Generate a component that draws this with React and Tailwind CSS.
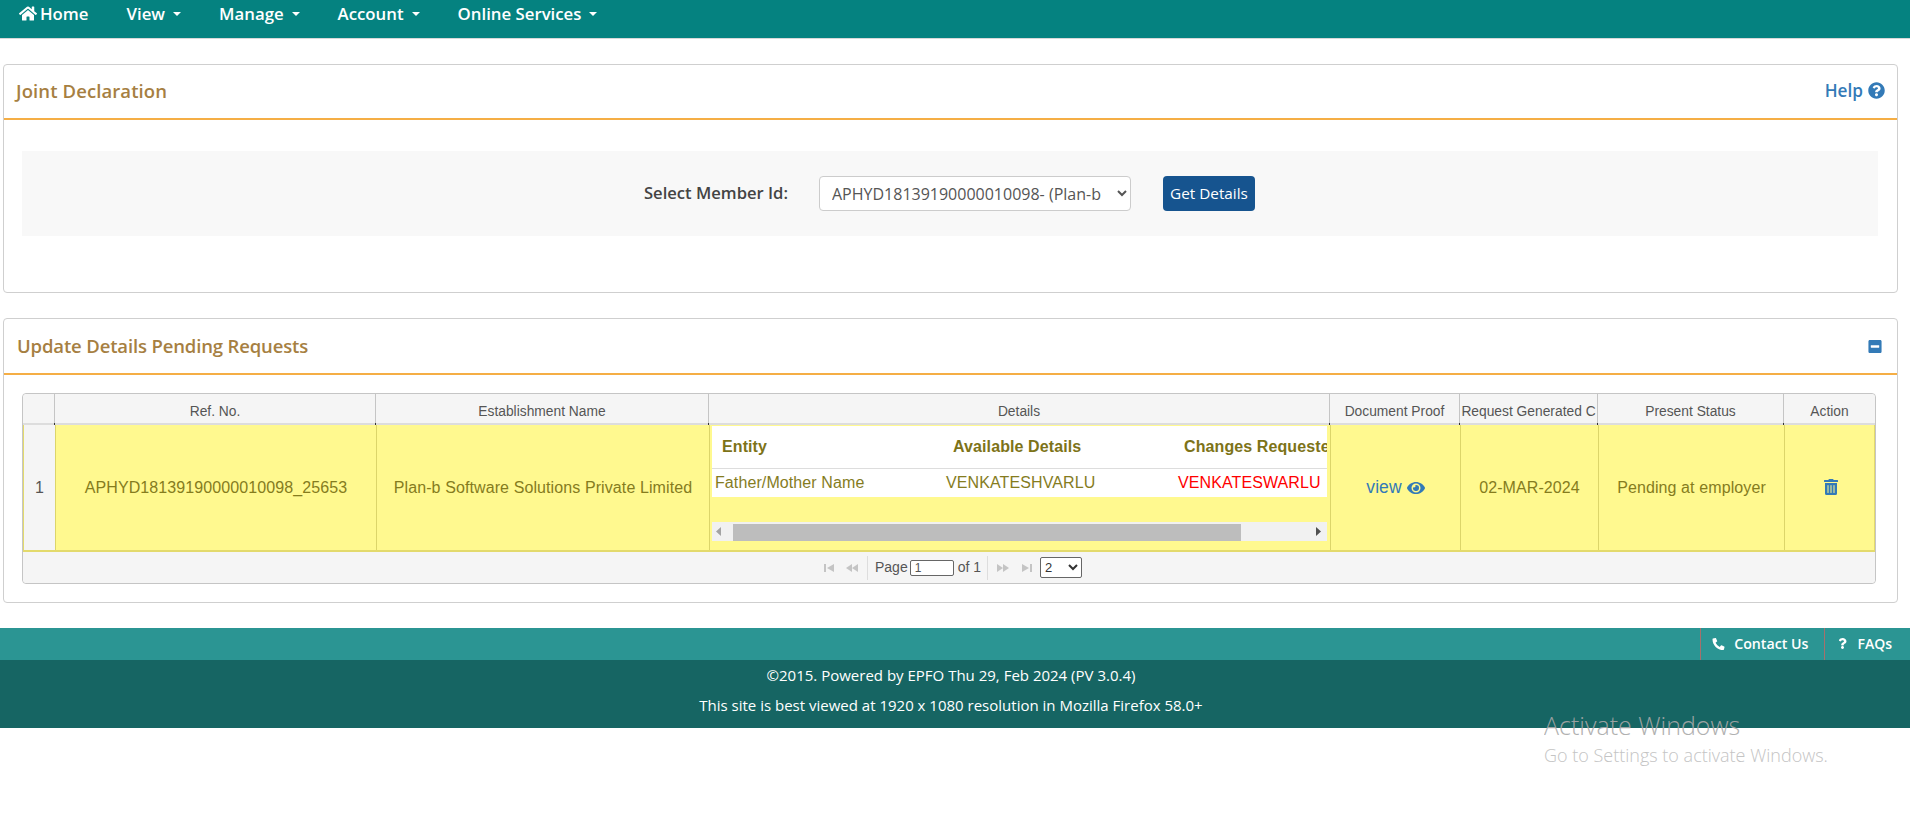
import React from 'react';
import { FaHome, FaQuestionCircle, FaEye, FaMinusSquare, FaTrashAlt, FaPhoneAlt, FaQuestion } from 'react-icons/fa';

const SEGOE = "font-['Open_Sans',sans-serif]";
const ARIAL = "font-['Liberation_Sans',Arial,sans-serif]";

// column widths of the grid, first one is the row number
const cols = ['w-[32px]', 'w-[321px]', 'w-[333px]', 'w-[621px]', 'w-[130px]', 'w-[138px]', 'w-[186px]', 'w-[91px]'];
const headers = ['', 'Ref. No.', 'Establishment Name', 'Details', 'Document Proof', 'Request Generated C', 'Present Status', 'Action'];

const menu = ['View', 'Manage', 'Account', 'Online Services'];

const Caret = () => (
  <span className="ml-[8px] inline-block h-0 w-0 border-x-[4px] border-t-[4px] border-x-transparent border-t-white" />
);

const NavBar = () => (
  <nav className={`h-[39px] border-b border-[#d8d8d8] bg-[#058280] text-white ${SEGOE}`}>
    <div className="flex h-[27px] items-center pl-[19px] text-[16.8px] font-semibold">
      <FaHome className="mr-[3px] h-[17px] w-[18px]" />
      <span>Home</span>
      {menu.map(m => (
        <span key={m} className="ml-[38px] flex items-center">
          {m}
          <Caret />
        </span>
      ))}
    </div>
  </nav>
);

const PanelHead = ({ title, children, titleCls, textCls }) => (
  <div className={`flex items-center justify-between border-b-2 border-[#f5ae45] ${titleCls}`}>
    <h2 className={`text-[18.5px] font-semibold text-[#a67f42] ${textCls} ${SEGOE}`}>{title}</h2>
    {children}
  </div>
);

const PagerArrow = ({ d }) => (
  <svg viewBox="0 0 14 10" className="h-[10px] w-[14px] fill-[#c4c4c4]"><path d={d} /></svg>
);

const Pager = () => (
  <div className={`flex h-[31px] items-center rounded-b bg-[#f5f5f5] pl-[799px] text-[14px] text-[#555] ${ARIAL}`}>
    <PagerArrow d="M2 1h2v8H2zM12 1v8L5 5z" />
    <span className="ml-[9px]"><PagerArrow d="M7 1v8L1 5zM13 1v8L7 5z" /></span>
    <span className="ml-[8px] h-[24px] border-l border-[#ddd]" />
    <span className="ml-[7px]">Page</span>
    <input readOnly value="1" className="ml-[2px] h-[16px] w-[44px] rounded-[2px] border border-[#666] bg-white px-[4px] text-[12px] outline-none" />
    <span className="ml-[4px]">of 1</span>
    <span className="ml-[6px] h-[24px] border-l border-[#ddd]" />
    <span className="ml-[8px]"><PagerArrow d="M1 1v8l6-4zM7 1v8l6-4z" /></span>
    <span className="ml-[10px]"><PagerArrow d="M2 1v8l7-4zM10 1h2v8h-2z" /></span>
    <select className="ml-[6px] h-[21px] w-[42px] rounded-[2px] border border-[#666] bg-white text-[13px] text-[#333]">
      <option>2</option>
    </select>
  </div>
);

const DetailsCell = () => (
  <div className="relative h-full overflow-hidden pl-[2px] pr-[3px] pt-[1px]">
    <div className="h-[71px] overflow-hidden bg-white">
      <div className="flex h-[43px] items-center border-b border-[#ddd] text-[16px] font-bold whitespace-nowrap text-[#7d7318]">
        <span className="ml-[10px] w-[231px] shrink-0">Entity</span>
        <span className="w-[231px] shrink-0">Available Details</span>
        <span>Changes Requested</span>
      </div>
      <div className="flex h-[28px] items-center text-[16px] whitespace-nowrap">
        <span className="ml-[3px] w-[231px] shrink-0">Father/Mother Name</span>
        <span className="w-[232px] shrink-0">VENKATESHVARLU</span>
        <span className="text-[#ff0000]">VENKATESWARLU</span>
      </div>
    </div>
    <div className="mt-[25px] flex h-[19px] items-center bg-[#f1f1f1]">
      <svg viewBox="0 0 21 19" className="h-[19px] w-[21px] shrink-0 fill-[#a3a3a3]"><path d="M9 5v9l-5-4.5z" /></svg>
      <div className="mt-[2px] h-[17px] w-[508px] bg-[#bdbdbd]" />
      <div className="flex-1" />
      <svg viewBox="0 0 17 19" className="h-[19px] w-[17px] shrink-0 fill-[#505050]"><path d="M6 5v9l5-4.5z" /></svg>
    </div>
  </div>
);

const Grid = () => (
  <div className={`ml-[18px] w-[1854px] rounded border border-[#c5c5c5] ${ARIAL}`}>
    <div className="flex h-[29px] rounded-t bg-[#f5f5f5] text-[13.8px] text-[#555]">
      {headers.map((h, i) => (
        <div key={i} className={`flex items-center justify-center overflow-hidden whitespace-nowrap border-r border-[#c5c5c5] pt-[7px] last:border-r-0 ${cols[i]}`}>{h}</div>
      ))}
    </div>
    {/* strip under the header with the little dark ticks */}
    <div className="flex h-[2px] bg-[#ddd]">
      {cols.map((c, i) => <div key={i} className={`border-r border-[#333] last:border-r-0 ${c}`} />)}
    </div>
    <div className="flex h-[127px] border-x border-b-2 border-[#e3da6c] bg-[#fff98f] text-[16px] tracking-[0.1px] text-[#857c1e]">
      <div className={`flex items-center justify-center border-r border-[#dcd56a] bg-[#f5f5f5] text-[#555] ${cols[0]}`}>1</div>
      <div className={`flex items-center justify-center border-r border-[#dcd56a] ${cols[1]}`}>APHYD18139190000010098_25653</div>
      <div className={`flex items-center justify-center border-r border-[#dcd56a] ${cols[2]}`}>Plan-b Software Solutions Private Limited</div>
      <div className={`border-r border-[#dcd56a] ${cols[3]}`}><DetailsCell /></div>
      <div className={`flex items-center justify-center gap-[5px] border-r border-[#dcd56a] text-[17.5px] text-[#337ab7] ${cols[4]}`}>view <FaEye className="h-[16px] w-[18px]" /></div>
      <div className={`flex items-center justify-center border-r border-[#dcd56a] ${cols[5]}`}>02-MAR-2024</div>
      <div className={`flex items-center justify-center border-r border-[#dcd56a] ${cols[6]}`}>Pending at employer</div>
      <div className="flex w-[89px] items-center justify-center pb-[2px] pl-[2px] text-[#337ab7]"><FaTrashAlt className="h-[16px] w-[14px]" /></div>
    </div>
    <Pager />
  </div>
);

const Footer = () => (
  <footer className={`mt-[25px] text-white ${SEGOE}`}>
    <div className="flex h-[32px] justify-end bg-[#2b9593] font-semibold">
      <div className="flex items-center border-l border-[#a5706c] pb-[1px] pl-[11px] pr-[16px] text-[14.2px]">
        <FaPhoneAlt className="h-[12px] w-[13px]" />
        <span className="ml-[9px]">Contact Us</span>
      </div>
      <div className="flex items-center border-l border-[#a5706c] pb-[1px] pl-[13px] pr-[18px] text-[14px]">
        <FaQuestion className="h-[11px] w-[9px]" />
        <span className="ml-[10px]">FAQs</span>
      </div>
    </div>
    <div className="flex h-[68px] flex-col items-center bg-[#166563] pr-[8px] pt-[5px] text-[15px]">
      <p className="h-[30px] leading-[20px]">©2015. Powered by EPFO Thu 29, Feb 2024 (PV 3.0.4)</p>
      <p className="leading-[20px]">This site is best viewed at 1920 x 1080 resolution in Mozilla Firefox 58.0+</p>
    </div>
  </footer>
);

export default function App() {
  return (
    <div className="relative h-[815px] overflow-hidden bg-white">
      <NavBar />

      <section className="ml-[3px] mr-[12px] mt-[25px] h-[229px] rounded border border-[#cfcfcf] bg-white">
        <PanelHead title="Joint Declaration" titleCls="h-[55px] pl-[12px] pr-[12px] pb-[1px]" textCls="tracking-[0.1px]">
          <a className={`flex items-center gap-[5px] text-[17.2px] font-semibold text-[#337ab7] ${SEGOE}`}>
            Help <FaQuestionCircle className="h-[17px] w-[17px]" />
          </a>
        </PanelHead>
        <div className="ml-[18px] mr-[19px] mt-[31px] flex h-[85px] items-center bg-[#f8f8f8] pl-[622px]">
          <label className={`text-[16.6px] font-semibold text-[#444] ${SEGOE}`}>Select Member Id:</label>
          <select className={`ml-[31px] h-[35px] w-[312px] rounded border border-[#ccc] bg-white pl-[8px] text-[16px] text-[#555] ${SEGOE}`}>
            <option>APHYD18139190000010098- (Plan-b</option>
          </select>
          <button className={`ml-[32px] h-[35px] w-[92px] rounded bg-[#16548f] text-[15.3px] text-white ${SEGOE}`}>Get Details</button>
        </div>
      </section>

      <section className="ml-[3px] mr-[12px] mt-[25px] h-[285px] rounded border border-[#cfcfcf] bg-white">
        <PanelHead title="Update Details Pending Requests" titleCls="h-[56px] pl-[13px] pr-[15px]" textCls="tracking-[-0.15px]">
          <FaMinusSquare className="h-[15px] w-[14px] text-[#337ab7]" />
        </PanelHead>
        <div className="pt-[18px]">
          <Grid />
        </div>
      </section>

      <Footer />

      {/* windows watermark lies over the footer */}
      <div className={`absolute left-[1544px] top-[708px] text-[#a8a8a8] ${SEGOE}`}>
        <p className="text-[25px] leading-[35px] font-light opacity-90">Activate Windows</p>
        <p className="text-[18px] leading-[24px] font-light text-[#c4c4c4]">Go to Settings to activate Windows.</p>
      </div>
    </div>
  );
}
